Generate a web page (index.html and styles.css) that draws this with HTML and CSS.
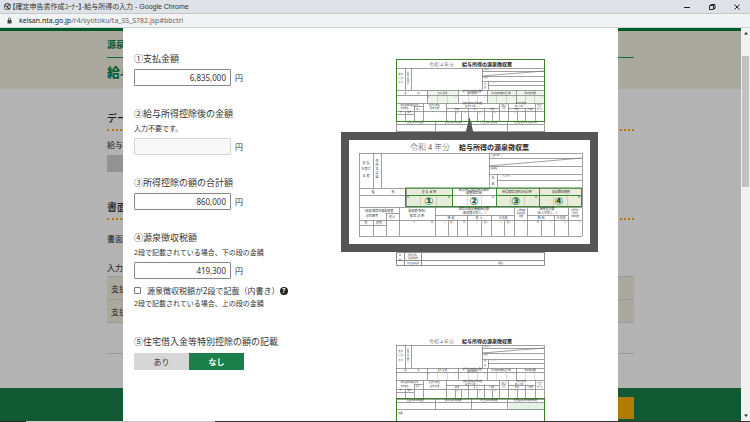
FILE: index.html
```html
<!DOCTYPE html>
<html lang="ja">
<head>
<meta charset="utf-8">
<title>【確定申告書作成コーナー】-給与所得の入力</title>
<link rel="stylesheet" href="styles.css">
</head>
<body>
<header class="titlebar">
  <svg class="globe" viewBox="0 0 16 16" aria-hidden="true"><circle cx="8" cy="8" r="8" fill="#4d5156"/><path d="M2 7l4 2v2l2 1v3c-4 0-6.500-3-6-8zM6 2l4 0v2l-2 1-1 2-3-1zM11 6l3 0 .5 3-2 3-2-2-2-1z" fill="#dee1e6"/></svg>
  <span class="window-title">【確定申告書作成ｺｰﾅｰ】-給与所得の入力 - Google Chrome</span>
  <button class="win" aria-label="最小化"><svg viewBox="0 0 8 8"><path d="M1 4.500h6"/></svg></button>
  <button class="win" aria-label="元に戻す"><svg viewBox="0 0 8 8"><path d="M1.500 2.500h4v4h-4zM3 2.500v-1h4v4h-1.500"/></svg></button>
  <button class="win" aria-label="閉じる"><svg viewBox="0 0 8 8"><path d="M1.500 1.500l5 5M6.500 1.500l-5 5"/></svg></button>
</header>
<div class="address">
  <svg class="lock" viewBox="0 0 10 14" aria-hidden="true"><path d="M1 6h8v7H1z" fill="#444"/><path d="M3 6V3.500a2 2 0 0 1 4 0V6" fill="none" stroke="#444" stroke-width="1.500"/></svg>
  <span class="url"><b>keisan.nta.go.jp</b>/r4/syotoku/ta_SS_S782.jsp#bbctrl</span>
</div>
<div class="viewport">
  <div class="page">
    <div class="hero">
      <div class="wrap">
        <p class="hero-sub">源泉徴</p>
        <h1 class="hero-title">給与所得</h1>
      </div>
    </div>
    <div class="body wrap">
      <h2>データ</h2>
      <p>給与の</p>
      <div class="grey-button"></div>
      <h2 class="second">書面で</h2>
      <p class="intro">書面で</p>
      <p class="caption">入力し</p>
      <table class="list">
        <tr><th>支払</th></tr>
        <tr><th>支払</th></tr>
      </table>
      <hr>
    </div>
    <footer class="footer"><div class="wrap"><div class="next"></div></div></footer>

    <main class="modal" role="dialog" aria-label="給与所得の入力">
      <section class="block">
        <form class="fields">
          <div class="field">
            <label class="name" for="pay">①支払金額</label>
            <div class="amount"><input id="pay" type="text" value="6,835,000"><span>円</span></div>
          </div>
          <div class="field">
            <label class="name" for="after">②給与所得控除後の金額</label>
            <p class="note">入力不要です。</p>
            <div class="amount"><input id="after" type="text" disabled><span>円</span></div>
          </div>
          <div class="field">
            <label class="name" for="deduct">③所得控除の額の合計額</label>
            <div class="amount"><input id="deduct" type="text" value="860,000"><span>円</span></div>
          </div>
          <div class="field">
            <label class="name" for="tax">④源泉徴収税額</label>
            <p class="note">2段で記載されている場合、下の段の金額</p>
            <div class="amount"><input id="tax" type="text" value="419,300"><span>円</span></div>
            <div class="check">
              <input id="two" type="checkbox"><label for="two">源泉徴収税額が2段で記載（内書き）</label>
              <button class="help" type="button" aria-label="ヘルプ">?</button>
            </div>
            <p class="note after">2段で記載されている場合、上の段の金額</p>
          </div>
        </form>
        <svg class="figure" viewBox="341 52 257 216" width="257" height="216">
          <g class="slip pale" data-x="396" data-y="68" data-sx="0.664" data-sy="0.64" data-text="0.65" data-tint="1" data-more="1"></g>
          <path class="rule" d="M396.500 130V265.500H544.500V130M396 252.500H545M396 260.500H545M404.500 250V265M421.500 250V265"/>
          <g class="tiny"><text x="399" y="256">備</text><text x="399" y="261">考</text><text x="408" y="256">住所(居所)</text><text x="408" y="259">又は所在地</text><text x="407" y="264">氏名又は名称</text><text x="498" y="264">(電話)</text></g>
          <text class="year small" x="429" y="66">令和 4 年分</text><text class="head small" x="462" y="66">給与所得の源泉徴収票</text>
          <rect class="mark" x="396.500" y="59.500" width="148" height="62"/>
          <path fill="#555" d="M469.500 117l4 16h-8z"/>
          <rect x="345" y="136" width="249" height="112" fill="#fff" stroke="#555" stroke-width="8"/>
          <text class="year" x="410" y="150">令和 4 年分</text><text class="head" x="459" y="150">給与所得の源泉徴収票</text>
          <g class="slip" data-x="359" data-y="153" data-sx="1" data-sy="1" data-text="1" data-tint="1"></g>
          <g class="green"><path d="M405.500 188v18.500h176V188zM405 195.500h47M496 195.500h86M452.500 188v18M496.500 188v18M539.500 188v18"/></g>
          <g class="nums"><text x="429" y="205">①</text><text x="474" y="205">②</text><text x="516" y="205">③</text><text x="559" y="205">④</text></g>
        </svg>
      </section>
      <section class="block">
        <div class="fields">
          <div class="field">
            <span class="name" id="loan">⑤住宅借入金等特別控除の額の記載</span>
            <div class="toggle" role="group" aria-labelledby="loan"><button type="button">あり</button><button type="button" class="on" aria-pressed="true">なし</button></div>
          </div>
        </div>
        <svg class="figure" viewBox="341 336 257 100" width="257" height="100">
          <text class="year small" x="429" y="344">令和 4 年分</text><text class="head small" x="462" y="344">給与所得の源泉徴収票</text>
          <g class="slip" data-x="396" data-y="346" data-sx="0.664" data-sy="0.65" data-text="0.65" data-more="1"></g>
          <rect x="509" y="404" width="35" height="7" fill="#2f8a2f" opacity=".12"/>
          <g class="tiny"><text x="398" y="415">(摘要)</text></g>
          <rect class="mark" x="396.500" y="399.500" width="148" height="50"/>
        </svg>
      </section>
    </main>
  </div>
  <div class="scrollbar" aria-hidden="true">
    <svg viewBox="0 0 8 8"><path d="M2 5.500l2-2.500 2 2.500z"/></svg>
    <div class="track"><div class="thumb"></div></div>
    <svg viewBox="0 0 8 8"><path d="M2 2.500l2 2.500 2-2.500z"/></svg>
  </div>
</div>
<div class="taskbar"></div>
<script src="slip.js"></script>
</body>
</html>
```
FILE: styles.css
```css
* { box-sizing: border-box; }
body {
  margin: 0;
  height: 100vh;
  display: flex;
  flex-direction: column;
  overflow: hidden;
  font-family: "Noto Sans", "Noto Sans CJK JP", sans-serif;
  font-size: 8px;
  color: #333;
}
p, h1, h2 { margin: 0; }
button, input { font: inherit; color: inherit; margin: 0; padding: 0; border: 0; }

.titlebar {
  display: flex;
  align-items: center;
  height: 14px;
  padding: 0 9px 0 4px;
  background: #dee1e6;
  border-bottom: 1px solid #c4c7cb;
}
.globe { width: 7px; height: 7px; margin-right: 1px; }
.window-title {
  flex: 1;
  font-family: "Liberation Sans", "Noto Sans CJK JP", sans-serif;
  font-size: 7px;
  line-height: 12px;
  font-feature-settings: "palt";
  color: #333;
}
.win { width: 8px; height: 8px; margin-left: 17px; background: none; display: flex; }
.win svg { width: 8px; height: 8px; fill: none; stroke: #222; stroke-width: 1; }

.address {
  display: flex;
  align-items: center;
  height: 14px;
  padding: 0 7px;
  background: #f1f3f4;
  border-bottom: 1px solid #d0d2d4;
}
.lock { width: 5px; height: 7px; margin-right: 7px; }
.url { font-size: 7px; line-height: 12px; color: #666; }
.url b { font-weight: 400; color: #222; }

.viewport { flex: 1; min-height: 0; display: flex; }
.page {
  position: relative;
  flex: 1;
  display: flex;
  flex-direction: column;
  overflow: hidden;
  background: #b3b3b3;
}
.wrap { width: calc(100% - 214px); margin: 0 auto; }
.hero {
  height: 61px;
  border-top: 3px solid #005a2b;
  background: #aaa89f;
  color: #005a2b;
}
.hero-sub { padding: 7px 0 5px; border-bottom: 1px solid #126b3d; font-size: 9px; line-height: 14px; font-weight: 700; }
.hero-title { padding-top: 5px; font-size: 13px; line-height: 18px; font-weight: 700; }
.body { flex: 1; padding-top: 22px; color: #222; }
.body h2 {
  padding-bottom: 4px;
  border-bottom: 2px dotted #b27a10;
  font-size: 10px;
  line-height: 14px;
  font-weight: 500;
}
.body h2.second { margin-top: 28px; }
.body p { margin-top: 8px; line-height: 12px; }
.body p.intro { margin-top: 13px; }
.body p.caption { margin-top: 17px; }
.grey-button { width: 50%; height: 17px; margin-top: 4px; background: #939393; }
.list { width: 100%; margin-top: 2px; border-collapse: collapse; background: #aaa89f; }
.list th { height: 23px; padding: 0 4px; border-top: 1px solid #999; border-bottom: 1px solid #999; text-align: left; font-weight: 400; }
.body hr { margin: 30px 0 0; border: 0; border-top: 1px solid #999; }
.footer { height: 33px; padding-top: 9px; background: #115a33; }
.next { width: 80px; height: 22px; margin-left: auto; border-radius: 1px; background: #b27c00; }

.modal {
  position: absolute;
  top: 0;
  bottom: 0;
  left: 123px;
  right: 123px;
  padding: 24px 20px 0 11px;
  overflow: hidden;
  background: #fff;
}
.block { display: flex; justify-content: space-between; margin-bottom: 26px; }
.figure { flex: none; }
.fields { display: flex; flex-direction: column; gap: 21px; }
.name { display: block; margin-bottom: 3px; font-size: 9px; line-height: 14px; white-space: nowrap; }
.note { margin: -1px 0 4px; font-size: 7px; line-height: 11px; white-space: nowrap; }
.amount { display: flex; align-items: center; gap: 4px; }
.amount input {
  width: 97px;
  height: 17px;
  padding: 0 4px;
  border: 1px solid #888;
  border-radius: 1px;
  background: #fff;
  text-align: right;
}
.amount input:disabled { background: #f8f8f8; border-color: #d4d4d4; }
.check { display: flex; align-items: center; margin-top: 6px; line-height: 11px; white-space: nowrap; }
.check input { appearance: none; width: 7px; height: 7px; margin-right: 6px; border: 1px solid #777; border-radius: 1px; }
.help { width: 8px; height: 8px; border-radius: 50%; background: #222; color: #fff; font-size: 7px; line-height: 8px; font-weight: 700; }
.note.after { margin: 2px 0 0; }
.toggle { display: flex; margin-top: 4px; }
.toggle button { width: 55px; height: 17px; background: #d6d6d6; }
.toggle .on { background: #1a7f4b; color: #fff; font-weight: 700; }

.rule { fill: none; stroke: #8c8c8c; }
.slip path { fill: none; stroke: #777; stroke-width: 1; stroke-opacity: .7; }
.slip text { text-anchor: middle; fill: #333; }
.slip .tint { fill: #e9ecd9; }
.slip.pale .tint { fill: #edf5ea; }
.tiny { font-size: 2px; fill: #333; }
.year { font-family: "Liberation Serif", "Noto Sans CJK JP", serif; font-size: 8px; font-weight: 300; fill: #444; }
.head { font-size: 7px; font-weight: 700; fill: #222; }
.year.small, .head.small { font-size: 5px; }
.mark { fill: none; stroke: #3c8220; stroke-width: 1; }
.green { fill: none; stroke: #2f8f2f; stroke-width: 1; }
.nums text { font-family: "DejaVu Sans", sans-serif; font-size: 11px; font-weight: 700; text-anchor: middle; fill: #0b5a35; }

.scrollbar { width: 9px; padding-left: 1px; display: flex; flex-direction: column; background: #f1f1f1; }
.scrollbar svg { width: 8px; height: 10px; fill: #333; }
.track { flex: 1; padding: 18px 1px 0 0; }
.thumb { height: 37%; background: #c1c1c1; }
.taskbar { height: 1px; background: linear-gradient(90deg, #222 26px, #c8c8c8 26px, #c8c8c8 215px, #333 215px); }
```
FILE: slip.js
```js
// Draws the withholding slip grid and its cell captions into every .slip group.
const NS = "http://www.w3.org/2000/svg";

// Horizontal rules: [y, x1, x2]
const rows = [
  [0, 0, 223], [5, 130, 223], [13, 130, 223], [21, 130, 223], [27, 138, 223],
  [35, 0, 223], [42, 0, 223], [54, 0, 223], [60, 27, 40], [62, 76, 155], [62, 168, 209],
  [67, 0, 223], [72, 0, 27], [83, 0, 223]
];
// Vertical rules: [x, y1, y2]
const cols = [
  [0, 0, 83], [14, 0, 35], [22, 0, 35], [130, 0, 35], [138, 21, 35], [223, 0, 83],
  [47, 35, 54], [93, 35, 54], [137, 35, 54], [180, 35, 54],
  [14, 67, 83], [27, 60, 83], [40, 54, 83], [76, 54, 83], [89, 67, 83], [98, 67, 83],
  [108, 62, 83], [122, 67, 83], [132, 62, 83], [145, 67, 83], [155, 54, 83],
  [168, 54, 83], [182, 67, 83], [195, 62, 83], [209, 54, 83]
];
const moreRows = [[87, 0, 223], [99, 0, 223]];
const moreCols = [[0, 83, 99], [58, 83, 99], [113, 83, 99], [167, 83, 99], [223, 83, 99]];
const tints = [[47, 93], [137, 180], [180, 223]];
// Captions: [x, baseline, text, size]
const words = [
  [7, 11, "支 払", 3], [7, 17, "を受け", 3], [7, 24, "る 者", 3],
  [18, 9, "住", 3], [18, 13, "所", 3], [18, 17, "又", 3], [18, 21, "は", 3], [18, 25, "居", 3],
  [137, 3, "(受給者番号)", 2], [135, 16, "(役職名)", 2], [147, 24, "(フリガナ)", 2],
  [134, 26, "氏", 3], [134, 32, "名", 3],
  [14, 40, "種", 3], [34, 40, "別", 3], [70, 40, "支 払 金 額", 3],
  [115, 38, "給与所得控除後の金額", 3], [115, 41, "(調整控除後)", 3],
  [158, 40, "所得控除の額の合計額", 3], [202, 40, "源泉徴収税額", 3],
  [49, 45, "内", 2], [90, 45, "円", 2], [134, 45, "円", 2], [177, 45, "円", 2], [220, 45, "円", 2],
  [20, 59, "(源泉)控除対象配偶者", 3], [13, 64, "の有無等", 3], [33, 65, "老人", 3],
  [58, 59, "配偶者(特別)", 3], [58, 64, "控 除 の 額", 3],
  [115, 57, "控除対象扶養親族の数", 3], [115, 61, "(配偶者を除く。)", 3],
  [92, 66, "特 定", 3], [120, 66, "老 人", 3], [144, 66, "その他", 3],
  [162, 58, "16歳未満", 2], [162, 61, "扶養親族", 2], [162, 64, "の数", 2],
  [188, 57, "障害者の数", 3], [188, 61, "(本人を除く。)", 3],
  [182, 66, "特 別", 3], [202, 66, "その他", 3],
  [216, 58, "非居住者", 2], [216, 61, "である", 2], [216, 64, "親族の数", 2],
  [7, 71, "有", 3], [20, 71, "従有", 3], [55, 70, "千", 2], [73, 70, "円", 2],
  [86, 70, "人", 2], [93, 70, "従人", 2], [105, 70, "内", 2], [118, 70, "人", 2],
  [127, 70, "従人", 2], [142, 70, "人", 2], [150, 70, "従人", 2], [165, 70, "人", 2],
  [179, 70, "内", 2], [192, 70, "人", 2], [206, 70, "人", 2], [220, 70, "人", 2]
];
const moreWords = [
  [29, 86, "社会保険料等の金額", 3], [86, 86, "生命保険料の控除額", 3],
  [140, 86, "地震保険料の控除額", 3], [195, 86, "住宅借入金等特別控除の額", 3]
];

function add(parent, name, attrs, text) {
  const el = document.createElementNS(NS, name);
  for (const key in attrs) el.setAttribute(key, attrs[key]);
  if (text) el.textContent = text;
  parent.appendChild(el);
}

document.querySelectorAll(".slip").forEach(g => {
  const d = g.dataset;
  const px = x => Math.round(+d.x + x * d.sx);
  const py = y => Math.round(+d.y + y * d.sy);
  const more = d.more === "1";
  if (d.tint) {
    tints.forEach(([a, b]) => add(g, "rect", {
      class: "tint", x: px(a), y: py(35), width: px(b) - px(a), height: py(54) - py(35)
    }));
  }
  let path = `M${px(130)} ${py(13)}L${px(223)} ${py(5)}`;
  rows.concat(more ? moreRows : []).forEach(([y, a, b]) => {
    path += `M${px(a)} ${py(y) + 0.5}H${px(b)}`;
  });
  cols.concat(more ? moreCols : []).forEach(([x, a, b]) => {
    path += `M${px(x) + 0.5} ${py(a)}V${py(b)}`;
  });
  add(g, "path", { d: path });
  // Digit separators inside the amount cells
  let ticks = "";
  [61, 77, 108, 122, 151, 165, 194, 208].forEach(x => {
    ticks += `M${px(x) + 0.5} ${py(42)}V${py(54)}`;
  });
  add(g, "path", { d: ticks, style: "stroke-opacity:.25" });
  words.concat(more ? moreWords : []).forEach(([x, y, t, size]) => {
    add(g, "text", { x: +d.x + x * d.sx, y: +d.y + y * d.sy, "font-size": size * d.text }, t);
  });
});
```
